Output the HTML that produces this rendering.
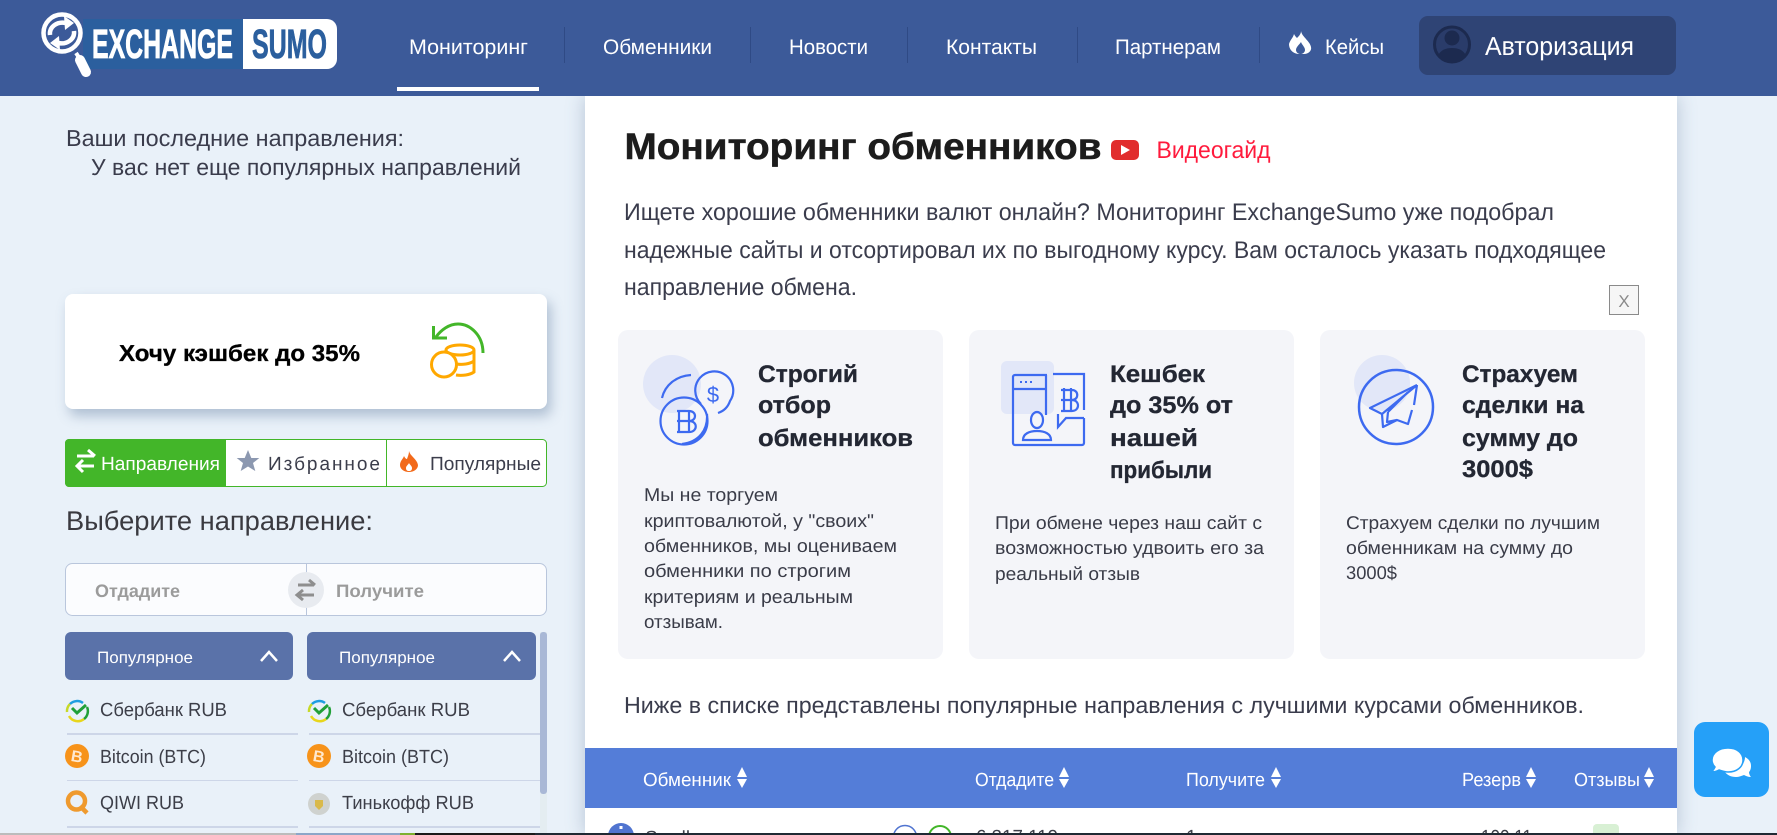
<!DOCTYPE html>
<html lang="ru"><head><meta charset="utf-8"><title>ExchangeSumo</title>
<style>
html,body{margin:0;padding:0;width:1777px;height:835px;overflow:hidden;background:#e9f1f9;font-family:"Liberation Sans",sans-serif}
.a{position:absolute}
#hd{left:0;top:0;width:1777px;height:96px;background:#3c5a99;z-index:3}
#pn{left:585px;top:96px;width:1092px;height:739px;background:#fff;box-shadow:0 0 18px rgba(70,100,140,.32)}
#cb{left:65px;top:294px;width:482px;height:115px;background:#fff;border-radius:8px;box-shadow:4px 7px 12px rgba(70,100,140,.35)}
svg{position:absolute;left:0;top:0;z-index:5}
text{font-family:"Liberation Sans",sans-serif;text-rendering:geometricPrecision}
.s{font-size:23px;fill:#3a3c4c}
.n{font-size:21px;fill:#fff}
.h{font-size:24px;font-weight:700;fill:#232733;stroke:#232733;stroke-width:.3px}
.b{font-size:18.5px;fill:#3a3c48}
.p{font-size:24px;fill:#3a3c4c}
.t{font-size:19px;fill:#fff}
.l{font-size:19px;fill:#3c3e48}
.u{font-size:16.5px;fill:#fff}
.g{font-size:18px;font-weight:700;fill:#9b9b9b}
</style></head><body>
<div class="a" id="pn"></div>
<div class="a" id="hd"></div>
<div class="a" id="cb"></div>
<svg width="1777" height="835" viewBox="0 0 1777 835" xmlns="http://www.w3.org/2000/svg">
<!-- logo -->
<rect x="83" y="19" width="162" height="50" fill="#2b5f9e"/>
<path d="M243 19H327a10 10 0 0 1 10 10V59a10 10 0 0 1-10 10H243z" fill="#fff"/>
<circle cx="62" cy="33" r="18.500" fill="#3c5a99" stroke="#fff" stroke-width="4.500"/>
<path d="M76 53l4 6" stroke="#fff" stroke-width="4"/>
<path d="M80 60L86 72" stroke="#fff" stroke-width="10" stroke-linecap="round"/>
<path d="M50 35c-1-8 7-14 16-12" fill="none" stroke="#fff" stroke-width="4.500"/><path d="M64 16l10 7-9 7z" fill="#fff"/>
<path d="M74 31c1 8-7 14-16 12" fill="none" stroke="#fff" stroke-width="4.500"/><path d="M60 50l-10-7 9-7z" fill="#fff"/>
<text x="92" y="58" font-size="41" font-weight="700" fill="#fff" stroke="#fff" stroke-width=".8" textLength="141" lengthAdjust="spacingAndGlyphs">EXCHANGE</text>
<text x="252" y="58" font-size="41" font-weight="700" fill="#2b5f9e" stroke="#2b5f9e" stroke-width=".8" textLength="75" lengthAdjust="spacingAndGlyphs">SUMO</text>
<!-- nav -->
<text class="n" x="409" y="54" textLength="119" lengthAdjust="spacingAndGlyphs">Мониторинг</text>
<rect x="397" y="87" width="142" height="4" fill="#fff"/>
<g stroke="#2f4a85" stroke-width="1"><path d="M564.500 27V63M750.500 27V63M907.500 27V63M1077.500 27V63M1259.500 27V63"/></g>
<text class="n" x="603" y="54" textLength="109" lengthAdjust="spacingAndGlyphs">Обменники</text>
<text class="n" x="789" y="54" textLength="79" lengthAdjust="spacingAndGlyphs">Новости</text>
<text class="n" x="946" y="54" textLength="91" lengthAdjust="spacingAndGlyphs">Контакты</text>
<text class="n" x="1115" y="54" textLength="106" lengthAdjust="spacingAndGlyphs">Партнерам</text>
<path fill-rule="evenodd" d="M1301 31c1 6 9 10 10 16 1 4-3 7-7 7h-6c-6-1-9-5-9-10 1-4 4-6 5-10 1 2 2 3 3 4 2-2 4-4 4-7zM1301 42c-2 3-5 5-5 8 0 2 2 4 4 4h1c2 0 4-2 4-4 0-3-3-5-4-8z" fill="#fff"/>
<text class="n" x="1325" y="54" textLength="59" lengthAdjust="spacingAndGlyphs">Кейсы</text>
<rect x="1419" y="16" width="257" height="59" rx="9" fill="#2f4475"/>
<circle cx="1452" cy="44.500" r="17.500" fill="#2a3c6a" stroke="#1c2a4f" stroke-width="3"/>
<circle cx="1452" cy="38" r="7.500" fill="#1c2a4f"/>
<path d="M1438 56c2-6 8-8 14-8s12 2 14 8a18 18 0 0 1-28 0z" fill="#1c2a4f"/>
<text x="1485" y="55" font-size="26" fill="#fff" textLength="149" lengthAdjust="spacingAndGlyphs">Авторизация</text>
<!-- sidebar -->
<text class="s" x="66" y="146" textLength="338" lengthAdjust="spacingAndGlyphs">Ваши последние направления:</text>
<text class="s" x="91" y="175" textLength="430" lengthAdjust="spacingAndGlyphs">У вас нет еще популярных направлений</text>
<text x="119" y="361" font-size="23" font-weight="700" fill="#000" stroke="#000" stroke-width=".3" textLength="241" lengthAdjust="spacingAndGlyphs">Хочу кэшбек до 35%</text>
<path d="M483 353C483 335 470 324 458 324 449 324 441 330 436 337" fill="none" stroke="#43b629" stroke-width="3"/>
<path d="M433.500 326V338H447" fill="none" stroke="#43b629" stroke-width="3"/>
<g fill="none" stroke="#ffa800" stroke-width="3">
<ellipse cx="460" cy="350" rx="14" ry="5"/><path d="M474 350V372C470 375 462 376 456 375M474 361C470 364 462 365 457 364M446 350V353"/>
<circle cx="444" cy="364.500" r="12.500" fill="#fff"/></g>
<!-- tabs -->
<rect x="65.500" y="439.500" width="481" height="47" rx="4" fill="#fff" stroke="#43b629"/>
<path d="M69 439H226V487H69a4 4 0 0 1-4-4V443a4 4 0 0 1 4-4z" fill="#43b629"/>
<path d="M386.500 439V487" stroke="#43b629"/>
<path d="M77 456H94M88 450l7 6M77 466H94M83 460l-6 6 6 6" fill="none" stroke="#fff" stroke-width="3"/>
<text class="t" x="101" y="470" textLength="119" lengthAdjust="spacingAndGlyphs">Направления</text>
<path d="M248 450l3.300 8h8l-6.300 5 2.300 8-7.300-4.500-7.300 4.500 2.300-8-6.300-5h8z" fill="#8c98b0"/>
<text class="t" x="268" y="470" style="fill:#3c3e4c" textLength="112" lengthAdjust="spacing">Избранное</text>
<path d="M409 451c1 5 8 8 9 14 0 4-4 7-9 7-5 0-9-3-9-7 0-4 3-6 4-9 1 2 2 3 3 3 1-3 2-5 2-8z" fill="#f26a1b"/><path d="M409 463c1 2 3 3 3 5s-1 3-3 3-3-1-3-3 2-3 3-5z" fill="#fff"/>
<text class="t" x="430" y="470" style="fill:#3c3e4c" textLength="111" lengthAdjust="spacingAndGlyphs">Популярные</text>
<text x="66" y="530" font-size="27" fill="#3a3a40" textLength="307" lengthAdjust="spacingAndGlyphs">Выберите направление:</text>
<!-- inputs -->
<rect x="65.500" y="563.500" width="481" height="52" rx="7" fill="#fbfcfe" stroke="#b9c6dc"/>
<path d="M306.500 563V616" stroke="#b9c6dc"/>
<text class="g" x="95" y="597" textLength="85" lengthAdjust="spacingAndGlyphs">Отдадите</text>
<text class="g" x="336" y="597" textLength="88" lengthAdjust="spacingAndGlyphs">Получите</text>
<circle cx="306" cy="590" r="18" fill="#e8ebf0"/>
<path d="M298 585H314M309 580l6 5M298 595H314M303 590l-6 5 6 5" fill="none" stroke="#8e8e8e" stroke-width="3"/>
<!-- dropdowns -->
<rect x="65" y="632" width="228" height="48" rx="6" fill="#5a72a9"/>
<rect x="307" y="632" width="229" height="48" rx="6" fill="#5a72a9"/>
<text class="u" x="97" y="663" textLength="96" lengthAdjust="spacingAndGlyphs">Популярное</text>
<text class="u" x="339" y="663" textLength="96" lengthAdjust="spacingAndGlyphs">Популярное</text>
<path d="M261 661l8-9 8 9M504 661l8-9 8 9" fill="none" stroke="#fff" stroke-width="2.500"/>
<rect x="540" y="632" width="7" height="203" fill="#e4edf1"/>
<rect x="540" y="632" width="7" height="162" rx="3" fill="#a9b8d6"/>
<!-- lists -->
<g fill="#cdd6e8"><rect x="67" y="733" width="231" height="2"/><rect x="309" y="733" width="231" height="2"/>
<rect x="67" y="780" width="231" height="1"/><rect x="309" y="780" width="231" height="1"/>
<rect x="67" y="826" width="231" height="2"/><rect x="309" y="826" width="231" height="2"/></g>
<text class="l" x="100" y="716" textLength="127" lengthAdjust="spacingAndGlyphs">Сбербанк RUB</text>
<text class="l" x="342" y="716" textLength="128" lengthAdjust="spacingAndGlyphs">Сбербанк RUB</text>
<text class="l" x="100" y="763" textLength="106" lengthAdjust="spacingAndGlyphs">Bitcoin (BTC)</text>
<text class="l" x="342" y="763" textLength="107" lengthAdjust="spacingAndGlyphs">Bitcoin (BTC)</text>
<text class="l" x="100" y="809" textLength="84" lengthAdjust="spacingAndGlyphs">QIWI RUB</text>
<text class="l" x="342" y="809" textLength="132" lengthAdjust="spacingAndGlyphs">Тинькофф RUB</text>
<g fill="none" stroke-width="2.500">
<path d="M67 712a10 10 0 0 1 3-8" stroke="#c7d928"/><path d="M70 704a10 10 0 0 1 13-1" stroke="#1e9de0"/><path d="M87 707a10 10 0 0 1-3 12" stroke="#21a038"/><path d="M84 719a10 10 0 0 1-15-3" stroke="#e8d61c"/>
<path d="M72 708l5 5 9-8" stroke="#21a038" stroke-width="3"/>
<path d="M309 712a10 10 0 0 1 3-8" stroke="#c7d928"/><path d="M312 704a10 10 0 0 1 13-1" stroke="#1e9de0"/><path d="M329 707a10 10 0 0 1-3 12" stroke="#21a038"/><path d="M326 719a10 10 0 0 1-15-3" stroke="#e8d61c"/>
<path d="M314 708l5 5 9-8" stroke="#21a038" stroke-width="3"/></g>
<circle cx="77" cy="756" r="12" fill="#f7931a"/><circle cx="319" cy="756" r="12" fill="#f7931a"/>
<text x="77" y="762" font-size="16" font-weight="700" fill="#ffe9cf" text-anchor="middle" transform="rotate(10 77 756)">B</text>
<text x="319" y="762" font-size="16" font-weight="700" fill="#ffe9cf" text-anchor="middle" transform="rotate(10 319 756)">B</text>
<circle cx="76.500" cy="801" r="8.500" fill="none" stroke="#ef9a2e" stroke-width="4.500"/><path d="M80 806l7 7" stroke="#ef9a2e" stroke-width="4.500"/>
<circle cx="319" cy="804" r="11" fill="#cfd2cf"/><path d="M315 800h8v6l-4 4-4-4z" fill="#d9b94a"/>
<!-- main -->
<text x="624.500" y="159" font-size="37" font-weight="700" fill="#1c1c1c" stroke="#1c1c1c" stroke-width=".5" textLength="477" lengthAdjust="spacingAndGlyphs">Мониторинг обменников</text>
<rect x="1111" y="140" width="28" height="20" rx="5" fill="#e12d2d"/><path d="M1121 145l9 5-9 5z" fill="#fff"/>
<text x="1156.500" y="158" font-size="24" fill="#ff1a3c" textLength="114" lengthAdjust="spacingAndGlyphs">Видеогайд</text>
<text class="p" x="624" y="220" textLength="930" lengthAdjust="spacingAndGlyphs">Ищете хорошие обменники валют онлайн? Мониторинг ExchangeSumo уже подобрал</text>
<text class="p" x="624" y="258" textLength="982" lengthAdjust="spacingAndGlyphs">надежные сайты и отсортировал их по выгодному курсу. Вам осталось указать подходящее</text>
<text class="p" x="624" y="295" textLength="233" lengthAdjust="spacingAndGlyphs">направление обмена.</text>
<rect x="1609.500" y="285.500" width="29" height="29" fill="#f6f6f6" stroke="#8a8a8a"/>
<text x="1624" y="307" font-size="17" fill="#8a8a8a" text-anchor="middle">X</text>
<!-- cards -->
<rect x="618" y="330" width="325" height="329" rx="10" fill="#f4f5f9"/>
<rect x="969" y="330" width="325" height="329" rx="10" fill="#f4f5f9"/>
<rect x="1320" y="330" width="325" height="329" rx="10" fill="#f4f5f9"/>
<circle cx="672" cy="384" r="29" fill="#e2e7f8"/>
<g fill="none" stroke="#3d6af0" stroke-width="2.200">
<circle cx="684" cy="421" r="23.500"/>
<path d="M662 398c3-13 14-22 29-23M707 414c1 16-8 28-25 30"/>
<path d="M701 404a19 19 0 1 1 29 -3 19 19 0 0 1-12 12" />
<path d="M679 410v22M689 410v22M677 411h12c8 0 8 10 0 10h-12M689 421c9 0 9 11 0 11h-12" stroke-width="2.200"/>
</g>
<text x="713" y="402" font-size="22" fill="#3d6af0" text-anchor="middle">$</text>
<text class="h" x="758" y="382" textLength="100" lengthAdjust="spacingAndGlyphs">Строгий</text>
<text class="h" x="758" y="413" textLength="73" lengthAdjust="spacingAndGlyphs">отбор</text>
<text class="h" x="758" y="446" textLength="155" lengthAdjust="spacingAndGlyphs">обменников</text>
<text class="b" x="644" y="501" textLength="134" lengthAdjust="spacingAndGlyphs">Мы не торгуем</text>
<text class="b" x="644" y="527" textLength="230" lengthAdjust="spacingAndGlyphs">криптовалютой, у "своих"</text>
<text class="b" x="644" y="552" textLength="253" lengthAdjust="spacingAndGlyphs">обменников, мы оцениваем</text>
<text class="b" x="644" y="577" textLength="207" lengthAdjust="spacingAndGlyphs">обменники по строгим</text>
<text class="b" x="644" y="603" textLength="209" lengthAdjust="spacingAndGlyphs">критериям и реальным</text>
<text class="b" x="644" y="628" textLength="79" lengthAdjust="spacingAndGlyphs">отзывам.</text>
<rect x="1001" y="361" width="53" height="53" rx="6" fill="#e2e7f8"/>
<g fill="none" stroke="#3d6af0" stroke-width="2.200">
<path d="M1047 375H1015a2 2 0 0 0-2 2V443a2 2 0 0 0 2 2H1082a2 2 0 0 0 2-2V418"/>
<path d="M1013 389H1046"/>
<path d="M1046 375V415M1053 374H1084V410M1084 418H1066L1058 427V414"/>
<ellipse cx="1037" cy="420" rx="6" ry="8"/><path d="M1023 440c0-6 6-9 14-9s14 3 14 9z"/>
<path d="M1020 382h2M1025 382h2M1030 382h2" stroke-width="2"/>
<path d="M1064 388v24M1071 388v24M1061 390h11c7 0 7 10 0 10h-11M1072 400c8 0 8 11 0 11h-11"/>
</g>
<text class="h" x="1110" y="382" textLength="95" lengthAdjust="spacingAndGlyphs">Кешбек</text>
<text class="h" x="1110" y="413" textLength="123" lengthAdjust="spacingAndGlyphs">до 35% от</text>
<text class="h" x="1110" y="446" textLength="88" lengthAdjust="spacingAndGlyphs">нашей</text>
<text class="h" x="1110" y="478" textLength="102" lengthAdjust="spacingAndGlyphs">прибыли</text>
<text class="b" x="995" y="529" textLength="267" lengthAdjust="spacingAndGlyphs">При обмене через наш сайт с</text>
<text class="b" x="995" y="554" textLength="269" lengthAdjust="spacingAndGlyphs">возможностью удвоить его за</text>
<text class="b" x="995" y="580" textLength="145" lengthAdjust="spacingAndGlyphs">реальный отзыв</text>
<circle cx="1382" cy="383" r="28" fill="#e2e7f8"/>
<circle cx="1396" cy="407" r="37" fill="none" stroke="#3d6af0" stroke-width="2.500"/>
<g fill="none" stroke="#3d6af0" stroke-width="2.200" stroke-linejoin="round">
<path d="M1417 385L1370 408 1382 414 1383 427 1397 420 1408 424 1412 410"/>
<path d="M1417 385L1414 405M1382 414L1417 385M1388 412L1387 422 1397 420M1388 412L1408 392"/>
</g>
<text class="h" x="1462" y="382" textLength="116" lengthAdjust="spacingAndGlyphs">Страхуем</text>
<text class="h" x="1462" y="413" textLength="122" lengthAdjust="spacingAndGlyphs">сделки на</text>
<text class="h" x="1462" y="446" textLength="116" lengthAdjust="spacingAndGlyphs">сумму до</text>
<text class="h" x="1462" y="477" textLength="71" lengthAdjust="spacingAndGlyphs">3000$</text>
<text class="b" x="1346" y="529" textLength="254" lengthAdjust="spacingAndGlyphs">Страхуем сделки по лучшим</text>
<text class="b" x="1346" y="554" textLength="227" lengthAdjust="spacingAndGlyphs">обменникам на сумму до</text>
<text class="b" x="1346" y="579" textLength="51" lengthAdjust="spacingAndGlyphs">3000$</text>
<text class="p" x="624" y="713" style="font-size:23px" textLength="960" lengthAdjust="spacingAndGlyphs">Ниже в списке представлены популярные направления с лучшими курсами обменников.</text>
<!-- table -->
<rect x="585" y="748" width="1092" height="60" fill="#547dd8"/>
<text class="t" x="643" y="786" textLength="88" lengthAdjust="spacingAndGlyphs">Обменник</text>
<text class="t" x="975" y="786" textLength="79" lengthAdjust="spacingAndGlyphs">Отдадите</text>
<text class="t" x="1186" y="786" textLength="79" lengthAdjust="spacingAndGlyphs">Получите</text>
<text class="t" x="1462" y="786" textLength="59" lengthAdjust="spacingAndGlyphs">Резерв</text>
<text class="t" x="1574" y="786" textLength="66" lengthAdjust="spacingAndGlyphs">Отзывы</text>
<path fill="#fff" d="M737 777l5-10 5 10zM737 779h10l-5 9zM1059 777l5-10 5 10zM1059 779h10l-5 9zM1271 777l5-10 5 10zM1271 779h10l-5 9zM1526 777l5-10 5 10zM1526 779h10l-5 9zM1644 777l5-10 5 10zM1644 779h10l-5 9z"/>
<circle cx="621" cy="836" r="13" fill="#5074d0"/><rect x="619.500" y="826" width="3" height="3" fill="#fff"/>
<text class="l" x="645" y="844" textLength="45" lengthAdjust="spacingAndGlyphs">Swell</text>
<circle cx="905" cy="837" r="11.500" fill="none" stroke="#5074d0" stroke-width="1.500"/>
<circle cx="940" cy="837" r="11" fill="none" stroke="#43b629" stroke-width="2"/>
<text class="l" x="976" y="843" textLength="82" lengthAdjust="spacingAndGlyphs">6 317 119</text>
<text class="l" x="1186" y="843">1</text>
<text class="l" x="1481" y="843" textLength="51" lengthAdjust="spacingAndGlyphs">100 11</text>
<rect x="1593" y="824" width="26" height="20" rx="4" fill="#d8f0d4"/>
<!-- bottom strip -->
<rect x="0" y="833" width="1777" height="2" fill="#1f2933"/>
<rect x="0" y="833" width="296" height="2" fill="#bcbcbc"/>
<rect x="296" y="833" width="119" height="2" fill="#8ca6c8"/>
<rect x="400" y="833" width="15" height="2" fill="#7db030"/>
<rect x="415" y="833" width="120" height="2" fill="#1a1a1a"/>
<!-- chat -->
<rect x="1694" y="722" width="75" height="75" rx="11" fill="#25a0f8"/>
<path d="M1745 757c4 2 6 5 6 9 0 3-1 5-2 6 0 2 1 4 2 5-3 0-5-1-7-2-3 1-5 2-8 2-5 0-9-2-11-5 11 0 20-6 20-15z" fill="#fff"/>
<path d="M1728 748c-9 0-16 5-16 12 0 3 1 5 3 7-1 2-2 4-4 5 3 0 6-1 8-2 3 1 6 2 9 2 9 0 15-5 15-12s-6-12-15-12z" fill="#fff" stroke="#25a0f8" stroke-width="1.500"/>
</svg>
</body></html>
